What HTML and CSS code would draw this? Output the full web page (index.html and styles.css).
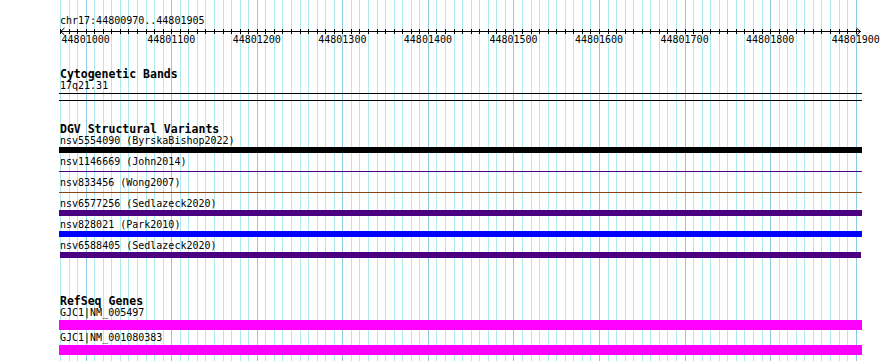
FILE: index.html
```html
<!DOCTYPE html>
<html lang="en">
<head>
    <meta charset="UTF-8">
    <title>chr17:44800970..44801905</title>
    <link rel="stylesheet" href="styles.css">
</head>
<body>
    <div class="browser">
        <svg class="grid" id="grid" width="890" height="361"></svg>

        <div class="locus">chr17:44800970..44801905</div>
        <svg class="ruler" id="ruler" width="890" height="21"></svg>

        <section class="track bands">
            <h2 class="track-title">Cytogenetic Bands</h2>
            <div class="label">17q21.31</div>
            <div class="band"></div>
        </section>

        <section class="track dgv">
            <h2 class="track-title">DGV Structural Variants</h2>
            <div class="feature">
                <div class="label">nsv5554090 (ByrskaBishop2022)</div>
                <div class="bar black"></div>
            </div>
            <div class="feature">
                <div class="label">nsv1146669 (John2014)</div>
                <div class="bar line indigo"></div>
            </div>
            <div class="feature">
                <div class="label">nsv833456 (Wong2007)</div>
                <div class="bar line brown"></div>
            </div>
            <div class="feature">
                <div class="label">nsv6577256 (Sedlazeck2020)</div>
                <div class="bar indigo"></div>
            </div>
            <div class="feature">
                <div class="label">nsv828021 (Park2010)</div>
                <div class="bar blue"></div>
            </div>
            <div class="feature">
                <div class="label">nsv6588405 (Sedlazeck2020)</div>
                <div class="bar indigo short"></div>
            </div>
        </section>

        <section class="track genes">
            <h2 class="track-title">RefSeq Genes</h2>
            <div class="gene">
                <div class="label">GJC1|NM_005497</div>
                <div class="bar magenta"></div>
            </div>
            <div class="gene">
                <div class="label">GJC1|NM_001080383</div>
                <div class="bar magenta"></div>
            </div>
        </section>
    </div>

    <script>
        const start = 44800970;
        const end = 44801905;
        const left = 60;
        const width = 800;
        const ns = 'http://www.w3.org/2000/svg';

        function toX(bp) {
            return left + (bp - start) * width / (end - start);
        }

        function add(parent, tag, attrs, text) {
            const el = document.createElementNS(ns, tag);
            for (const k in attrs) el.setAttribute(k, attrs[k]);
            if (text) el.textContent = text;
            parent.appendChild(el);
            return el;
        }

        const grid = document.getElementById('grid');
        const ruler = document.getElementById('ruler');

        // axis with arrows at both ends
        add(ruler, 'line', { x1: 60, y1: 4.5, x2: 861, y2: 4.5, class: 'axis' });
        add(ruler, 'polyline', { points: '64.5,1 60.5,4.5 64.5,8', class: 'axis' });
        add(ruler, 'polyline', { points: '856.5,1 860.5,4.5 856.5,8', class: 'axis' });

        for (let bp = start; bp <= 44801900; bp += 10) {
            const x = Math.round(toX(bp)) + 0.5;
            const major = bp % 100 === 0;
            add(grid, 'line', { x1: x, y1: 0, x2: x, y2: 361, class: major ? 'major' : 'minor' });
            add(ruler, 'line', { x1: x, y1: 2, x2: x, y2: 7, class: 'axis' });
            if (major) {
                add(ruler, 'text', { x: toX(bp), y: 16, 'text-anchor': 'middle' }, String(bp));
            }
        }
    </script>
</body>
</html>
```

FILE: styles.css
```css
body {
    margin: 0;
    background-color: #fff;
    color: #000;
    font-family: "DejaVu Sans Mono", "Liberation Mono", monospace;
    font-size: 10px;
}

.browser {
    position: relative;
    width: 890px;
    height: 361px;
    overflow: hidden;
}

.grid {
    position: absolute;
    left: 0;
    top: 0;
}

.grid .minor {
    stroke: #aeeaf0;
    stroke-width: 1;
}

.grid .major {
    stroke: #8ccbe6;
    stroke-width: 1;
}

.locus {
    position: relative;
    padding: 15px 0 0 60px;
    height: 12px;
    line-height: 12px;
}

.ruler {
    position: relative;
    display: block;
}

.ruler .axis {
    stroke: #000;
    stroke-width: 1;
    fill: none;
}

.ruler text {
    font-family: "DejaVu Sans Mono", "Liberation Mono", monospace;
    font-size: 10px;
    fill: #000;
}

.track {
    position: relative;
    padding-left: 60px;
}

.track-title {
    margin: 0;
    font-size: 11.5px;
    font-weight: bold;
    line-height: 12px;
}

.label {
    line-height: 12px;
    height: 12px;
    white-space: pre;
}

.bands {
    margin-top: 20px;
}

.band {
    margin: 1px 0 0 -1px;
    width: 803px;
    height: 6px;
    border-top: 1px solid #000;
    border-bottom: 1px solid #000;
}

.dgv {
    margin-top: 22px;
}

.feature {
    height: 21px;
}

.bar {
    margin-left: -1px;
    width: 803px;
    height: 6px;
}

.bar.line {
    height: 1px;
    margin-top: 3px;
}

.bar.short {
    margin-left: 0;
    width: 801px;
}

.black {
    background-color: #000;
}

.indigo {
    background-color: #4b0082;
}

.brown {
    background-color: #8b4513;
}

.blue {
    background-color: #0000ff;
}

.magenta {
    background-color: #ff00ff;
}

.genes {
    margin-top: 34px;
}

.gene {
    height: 25px;
}

.gene .bar {
    height: 10px;
    margin-top: 1px;
}
```
